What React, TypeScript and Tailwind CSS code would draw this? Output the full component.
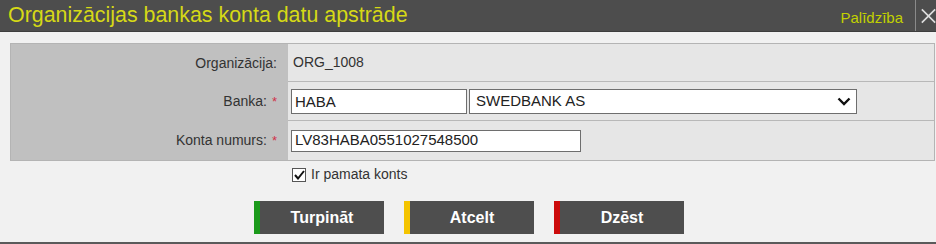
export default function App() {
  const font = { fontFamily: '"Liberation Sans", Arial, sans-serif' };
  return (
    <div
      className="w-[936px] h-[244px] bg-[#f1f1f1] flex flex-col border-b-2 border-[#5a5a5a] overflow-hidden"
      style={font}
    >
      <div className="h-[32px] bg-[#4d4d4d] flex items-center shrink-0 border-b border-[#3e3e3e]">
        <div className="pl-[8px] text-[21.4px] text-[#d6d916] leading-none flex-1">
          Organizācijas bankas konta datu apstrāde
        </div>
        <div className="text-[15px] text-[#c2d100] mr-[12px] mt-[5px]">Palīdzība</div>
        <div className="h-full border-l border-[#8a8a8a] w-[21px] flex items-center pl-[5px]">
          <svg width="18" height="18" viewBox="0 0 18 18">
            <path d="M1 1 L17 17 M17 1 L1 17" stroke="#dcdcdc" strokeWidth="2" />
          </svg>
        </div>
      </div>

      <div className="ml-[10px] mr-[1px] mt-[11px] border border-[#b4b4b4] grid grid-cols-[277px_1fr] text-[14px] text-[#333]">
        <div className="bg-[#c0c0c0] flex flex-col">
          <div className="h-[38px] flex items-center justify-end pr-[11px]">Organizācija:</div>
          <div className="h-[39px] flex items-center justify-end pr-[11px]">
            Banka:<span className="text-[#d0314a] ml-[5px] text-[13px]">*</span>
          </div>
          <div className="h-[39px] flex items-center justify-end pr-[11px]">
            Konta numurs:<span className="text-[#d0314a] ml-[5px] text-[13px]">*</span>
          </div>
        </div>
        <div className="bg-[#e6e6e6] flex flex-col">
          <div className="h-[38px] flex items-center pl-[5px] border-b border-[#b8b8b8]">ORG_1008</div>
          <div className="h-[39px] flex items-center pl-[3px] gap-[2px] border-b border-[#b8b8b8]">
            <input
              readOnly
              defaultValue="HABA"
              className="w-[176px] h-[25px] bg-white border border-[#6e6e6e] px-[3px] text-[15px] text-[#222] outline-none"
              style={font}
            />
            <div className="relative w-[388px] h-[25px]">
              <select
                className="appearance-none w-full h-full bg-white border border-[#6e6e6e] px-[6px] text-[15px] text-[#222] outline-none"
                style={font}
                defaultValue="SWEDBANK AS"
              >
                <option>SWEDBANK AS</option>
              </select>
              <svg
                className="absolute right-[6px] top-[8px] pointer-events-none"
                width="14"
                height="9"
                viewBox="0 0 14 9"
              >
                <path d="M1.5 1.5 L7 7 L12.5 1.5" stroke="#111" strokeWidth="2.4" fill="none" />
              </svg>
            </div>
          </div>
          <div className="h-[39px] flex items-center pl-[3px]">
            <input
              readOnly
              defaultValue="LV83HABA0551027548500"
              className="w-[290px] h-[22px] bg-white border border-[#6e6e6e] px-[3px] text-[15px] text-[#222] outline-none"
              style={font}
            />
          </div>
        </div>
      </div>

      <div className="flex items-center pl-[292px] mt-[3px] gap-[5px] text-[14px] text-[#333]">
        <div className="w-[14px] h-[14px] border border-[#555] bg-white flex items-center justify-center">
          <svg width="11" height="10" viewBox="0 0 11 10">
            <path d="M1 5 L4 8.5 L10 1" stroke="#111" strokeWidth="2" fill="none" />
          </svg>
        </div>
        <span>Ir pamata konts</span>
      </div>

      <div className="flex pl-[254px] mt-[16px] gap-[20px]">
        {[
          { t: "Turpināt", c: "bg-[#1b9a1b]" },
          { t: "Atcelt", c: "bg-[#f4c400]" },
          { t: "Dzēst", c: "bg-[#cc0b0b]" },
        ].map((b) => (
          <button key={b.t} className="w-[130px] h-[33px] bg-[#4e4e4e] flex">
            <span className={`w-[6px] h-full ${b.c}`} />
            <span className="flex-1 flex items-center justify-center text-white font-bold text-[16px]">
              {b.t}
            </span>
          </button>
        ))}
      </div>
    </div>
  );
}
